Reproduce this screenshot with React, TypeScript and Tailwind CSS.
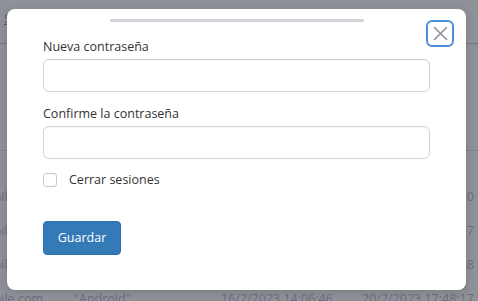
import React, { useState } from 'react';

type Row = { email: string; device: string; start: string; last: string };

const rows: Row[] = [
  { email: 'usuario@mobile.com', device: '"Android"', start: '15/2/2023 09:12:31', last: '20/2/2023 17:50:10' },
  { email: 'usuario@mobile.com', device: '"Android"', start: '15/2/2023 11:40:02', last: '20/2/2023 17:49:07' },
  { email: 'usuario@mobile.com', device: '"Android"', start: '16/2/2023 08:21:55', last: '20/2/2023 17:48:08' },
  { email: 'usuario@mobile.com', device: '"Android"', start: '16/2/2023 14:06:46', last: '20/2/2023 17:48:17' },
];

const font = { fontFamily: '"Open Sans", "Noto Sans", sans-serif' };

function SessionsPage() {
  return (
    <div className="h-full bg-white text-[12.5px] text-[#b4b7be]">
      <div className="h-[44px] border-b border-[#b9c6dc] pl-[4px] pt-[10px]">
        <span className="text-[#7f9fc6] underline">Sesiones activas</span>
      </div>
      <div className="h-[107px] border-b border-[#dcdee3]" />
      <div className="pt-[29px]">
        {rows.map((r, i) => (
          <div key={i} className="-ml-[100px] flex h-[34px] items-center whitespace-nowrap">
            <div className="w-[174px] shrink-0 pr-[31px] text-right">{r.email}</div>
            <div className="w-[147px] shrink-0">{r.device}</div>
            <div className="w-[141px] shrink-0">{r.start}</div>
            <div className="shrink-0">{r.last}</div>
          </div>
        ))}
      </div>
    </div>
  );
}

function Field({ label }: { label: string }) {
  return (
    <div>
      <label className="block h-[18px] leading-[18px] text-[12.5px] text-[#333]">{label}</label>
      <input
        type="password"
        className="mt-[3px] block h-[33px] w-full rounded-[6px] border border-[#d2d2d8] bg-white px-3 shadow-[inset_0_1px_1px_rgba(0,0,0,0.04)] outline-none"
      />
    </div>
  );
}

export default function App() {
  const [logout, setLogout] = useState(false);

  return (
    <div className="relative h-[301px] w-[478px] overflow-hidden" style={font}>
      <SessionsPage />
      <div className="absolute inset-0 bg-[#1f2433]/50" />

      <div className="absolute left-[7px] top-[9px] h-[281px] w-[459px] rounded-[8px] bg-white pt-[10px] shadow-[0_2px_8px_rgba(0,0,0,0.15)]">
        <div className="mx-auto h-[3px] w-[254px] rounded-full bg-[#d1d3d9]" />

        <button className="absolute right-[12px] top-[11px] flex h-[27px] w-[28px] items-center justify-center rounded-[6px] border-2 border-[#4a90d9] bg-white">
          <svg width="15" height="15" viewBox="0 0 15 15" fill="none" stroke="#8c9099" strokeWidth="1.6" strokeLinecap="round">
            <path d="M1.5 1.5 L13.5 13.5 M13.5 1.5 L1.5 13.5" />
          </svg>
        </button>

        <div className="px-[36px] pt-[16px]">
          <Field label="Nueva contraseña" />
          <div className="mt-[13px]">
            <Field label="Confirme la contraseña" />
          </div>

          <label className="mt-[14px] flex h-[14px] items-center gap-[12px] text-[12.5px] text-[#333]">
            <input
              type="checkbox"
              checked={logout}
              onChange={e => setLogout(e.target.checked)}
              className="h-[14px] w-[14px] appearance-none rounded-[3px] border border-[#c8c8ce] bg-white"
            />
            Cerrar sesiones
          </label>

          <button className="mt-[34px] h-[34px] w-[78px] rounded-[4px] border border-[#2f72b3] bg-[#337ab7] text-[12.5px] text-white">
            Guardar
          </button>
        </div>
      </div>
    </div>
  );
}
